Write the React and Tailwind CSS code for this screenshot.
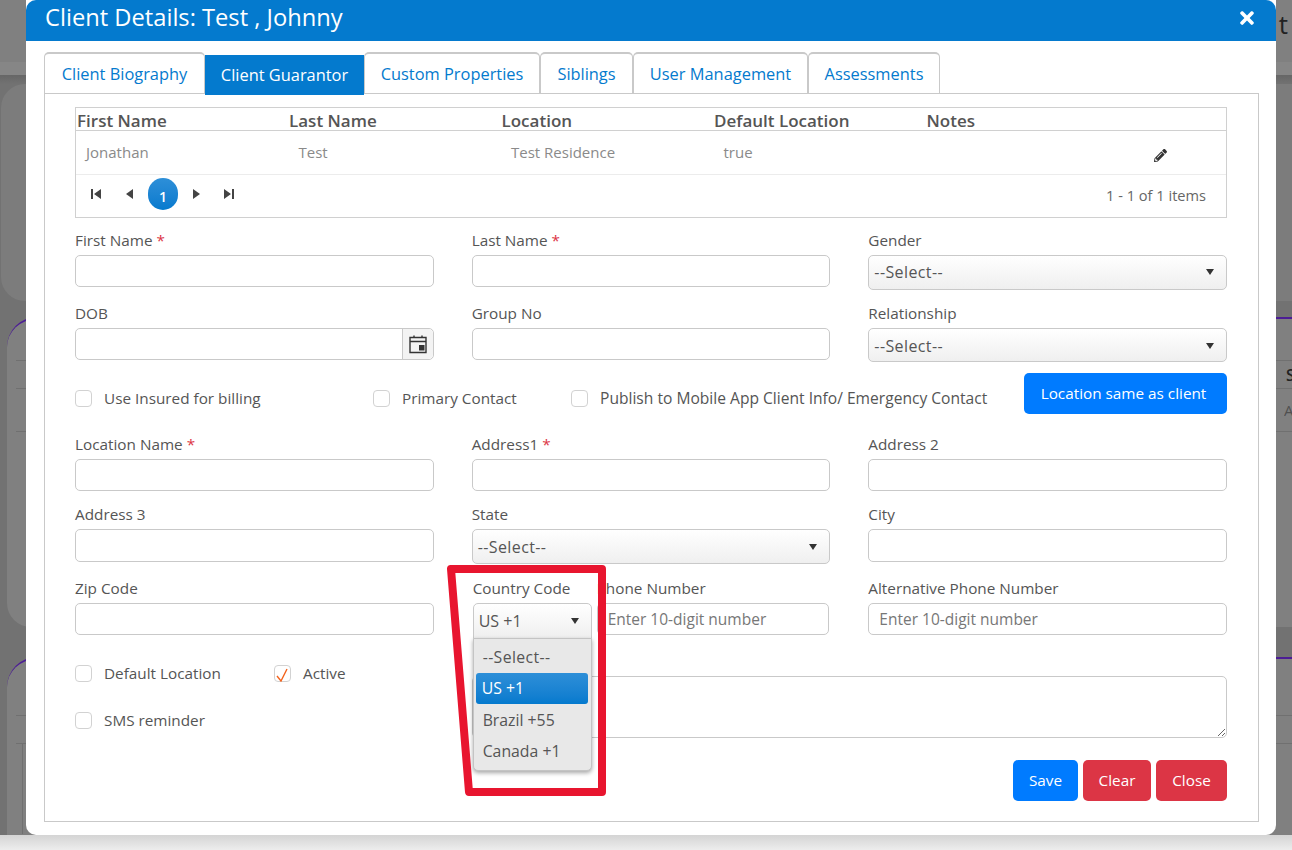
import React from 'react';
import { FaPencilAlt, FaTimes } from 'react-icons/fa';

const Required = () => <span className="text-[#dc3545]"> *</span>;

const Field = ({ label, required, children, className = '' }) => (
  <div className={className}>
    <label className="block h-[21px] text-[15.3px] leading-[21px] text-[#555]">
      {label}
      {required && <Required />}
    </label>
    <div className="mt-1">{children}</div>
  </div>
);

const TextInput = ({ placeholder, className = '' }) => (
  <input
    placeholder={placeholder}
    className={`block h-8 w-full rounded-[5px] border border-[#c9c9c9] bg-white px-[10px] text-[15.5px] text-[#555] placeholder:text-[#777] ${className}`}
  />
);

const Caret = () => (
  <svg width="8" height="6" viewBox="0 0 8 6" className="text-[#333]">
    <path d="M0 0h8L4 6z" fill="currentColor" />
  </svg>
);

const Select = ({ value = '--Select--', className = '' }) => (
  <div
    className={`flex items-center justify-between rounded-[5px] border border-[#c9c9c9] bg-gradient-to-b from-white to-[#efefef] pl-[5px] pr-3 text-[16px] text-[#555] ${className}`}
  >
    <span className={value === '--Select--' ? 'tracking-[0.4px]' : ''}>{value}</span>
    <Caret />
  </div>
);

const Checkbox = ({ label, checked, className = '', textClass = '' }) => (
  <label className={`flex items-center text-[15.3px] leading-[21px] text-[#555] ${className}`}>
    <span className="relative mr-3 block h-[17px] w-[17px] rounded-[4px] border border-[#d2d2d2] bg-white">
      {checked && (
        <svg width="17" height="17" viewBox="0 0 17 17" className="absolute -left-px -top-px text-[#f3641e]">
          <path d="M3 11l4 5 6-12" fill="none" stroke="currentColor" strokeWidth="1.4" />
        </svg>
      )}
    </span>
    <span className={textClass}>{label}</span>
  </label>
);

const Tab = ({ label, width, active }) =>
  active ? (
    <div
      className={`${width} -mb-[2px] mt-[3px] flex h-10 items-center justify-center bg-[#047ace] pt-px text-[16.4px] text-white`}
    >
      {label}
    </div>
  ) : (
    <div
      className={`${width} flex h-[41px] items-center justify-center rounded-t-[5px] border-x border-t-2 border-[#c9c9c9] pt-[2px] text-[16.4px] text-[#047ace]`}
    >
      {label}
    </div>
  );

const PagerIcon = ({ d }) => (
  <svg width="10" height="10" viewBox="0 0 10 10" className="text-[#444]">
    <path d={d} fill="currentColor" />
  </svg>
);

const GridTable = () => (
  <div className="border border-[#d0d0d0] text-[#555]">
    <div className="grid h-[23px] grid-cols-[212px_212.5px_212.5px_212.5px_1fr] items-center border-b border-[#d0d0d0] pb-[2px] pl-px text-[17px] font-semibold">
      <span>First Name</span>
      <span>Last Name</span>
      <span>Location</span>
      <span>Default Location</span>
      <span>Notes</span>
    </div>
    <div className="grid h-11 grid-cols-[212.5px_212.5px_212.5px_212.5px_1fr] items-center border-b border-[#ececec] pl-[10px] text-[15px] text-[#8a8a8a]">
      <span>Jonathan</span>
      <span>Test</span>
      <span>Test Residence</span>
      <span>true</span>
      <span className="flex justify-end pr-[59px] pt-[6px] text-[#333]">
        <FaPencilAlt size={13} />
      </span>
    </div>
    <div className="flex h-[42px] items-center justify-between pb-1 pl-[15px] pr-5">
      <div className="flex items-center text-[#444]">
        <span className="w-[33px]"><PagerIcon d="M0 0h2v10H0zM10 0v10L3 5z" /></span>
        <span className="w-[24px]"><PagerIcon d="M9 0v10L2 5z" /></span>
        <span className="flex h-8 w-[30px] items-center justify-center rounded-full bg-gradient-to-b from-[#2d8fd8] to-[#047ace] pt-1 text-[14px] font-semibold text-white">
          1
        </span>
        <span className="ml-[14px] w-[32px]"><PagerIcon d="M1 0v10l7-5z" /></span>
        <span className="w-[14px]"><PagerIcon d="M0 0v10l7-5zM8 0h2v10H8z" /></span>
      </div>
      <span className="pt-1 text-[14.6px] text-[#666]">1 - 1 of 1 items</span>
    </div>
  </div>
);

const CountryDropdown = () => (
  <div className="absolute left-0 top-[35px] z-10 h-[133px] w-[119px] rounded-b-[5px] border border-[#c4c4c4] bg-[#e8e8e8] pl-[2px] pr-[3px] pt-[3px] text-[15.8px] text-[#555] shadow-[0_2px_4px_rgba(0,0,0,0.35)]">
    <div className="flex h-[31px] items-center pl-[7px] tracking-[0.4px]">--Select--</div>
    <div className="flex h-[31px] items-center rounded-[3px] bg-gradient-to-b from-[#2d8fd8] to-[#047ace] pl-[6px] pt-px text-white">
      US +1
    </div>
    <div className="flex h-[31px] items-center pl-[7px] pt-[2px]">Brazil +55</div>
    <div className="flex h-[31px] items-center pl-[7px] pt-[2px]">Canada +1</div>
  </div>
);

// dimmed page behind the modal, only its edges show
const Backdrop = () => (
  <div className="absolute inset-0 flex flex-col bg-[#727272]">
    <div className="flex h-[62px] justify-end bg-[#808080] pr-[4px] pt-[9px] text-[26px] leading-[30px] text-[#222]">
      t
    </div>
    <div className="h-[13px] bg-[#868686]" />
    <div className="h-[9px] bg-gradient-to-b from-[#666] to-[#727272]" />
    <div className="ml-px h-[217px] rounded-l-[24px] bg-[#7c7c7c]" />
    <div className="h-[16px]" />
    <div className="ml-[7px] h-[310px] rounded-tl-[30px] rounded-bl-[24px] border-t-2 border-[#4c1d95] bg-[#808080]">
      <div className="ml-[9px] mt-[41px] flex h-[29px] justify-end border-y border-[#707070] text-[16px] font-semibold leading-[28px] text-[#222]">
        <span className="w-[6px] overflow-hidden">S</span>
      </div>
      <div className="ml-[9px] flex h-[43px] items-center justify-end border-b border-[#707070] text-[15px] text-[#505050]">
        <span className="w-[8px] overflow-hidden">A</span>
      </div>
    </div>
    <div className="h-[30px]" />
    <div className="ml-[7px] flex-1 rounded-tl-[30px] border-t-2 border-[#4c1d95] bg-[#808080]">
      <div className="ml-[9px] mt-[56px] h-[29px] border-y border-[#707070]" />
      <div className="ml-[15px] h-[90px] border-l border-[#707070]" />
    </div>
    <div className="h-[15px] bg-gradient-to-b from-[#d4d4d4] to-[#ededed]" />
  </div>
);

const Annotation = () => (
  <svg width="170" height="245" viewBox="0 0 170 245" className="absolute left-[443px] top-[560px] z-20">
    <path d="M8 9H159V232H26Z" fill="none" stroke="#e8152f" strokeWidth="8" strokeLinejoin="round" />
  </svg>
);

export default function App() {
  return (
    <div
      className="relative h-[850px] w-[1292px] overflow-hidden"
      style={{ fontFamily: '"Open Sans", "Noto Sans", sans-serif' }}
    >
      <Backdrop />

      <div className="absolute left-[26px] top-0 h-[835px] w-[1250px] rounded-b-[10px] bg-white">
        <div className="flex h-[41px] items-center justify-between rounded-t-[10px] bg-[#047ace] pb-1.5 pl-[19px] pr-[19px] text-white">
          <h1 className="text-[23.7px] font-normal">Client Details: Test , Johnny</h1>
          <FaTimes size={20} />
        </div>

        <div className="ml-[18px] mr-[17px] pt-[11px]">
          <div className="flex">
            <Tab label="Client Biography" width="w-[161px]" />
            <Tab label="Client Guarantor" width="w-[159px]" active />
            <Tab label="Custom Properties" width="w-[176px]" />
            <Tab label="Siblings" width="w-[93px]" />
            <Tab label="User Management" width="w-[175px]" />
            <Tab label="Assessments" width="w-[132px]" />
          </div>

          <div className="h-[729px] border border-[#c9c9c9] pl-[30px] pr-[31px] pt-[13px]">
            <GridTable />

            <div className="mt-3 grid grid-cols-3 gap-x-[38px]">
              <Field label="First Name" required><TextInput /></Field>
              <Field label="Last Name" required><TextInput /></Field>
              <Field label="Gender"><Select className="h-[35px] pb-px" /></Field>
            </div>

            <div className="mt-[13px] grid grid-cols-3 gap-x-[38px]">
              <Field label="DOB">
                <div className="flex h-8 rounded-[5px] border border-[#c9c9c9]">
                  <div className="flex-1" />
                  <div className="flex w-[31px] items-center justify-center rounded-r-[5px] border-l border-[#c9c9c9] bg-[#f3f3f3]">
                    <svg width="18" height="20" viewBox="0 0 18 20" className="text-[#333]">
                      <path d="M1 3.5h16v15H1zM1 7.5h16M5 1.5V4M13 1.5V4" fill="none" stroke="currentColor" strokeWidth="1.4" />
                      <path d="M10 11h5.5v5.5H10z" fill="currentColor" />
                    </svg>
                  </div>
                </div>
              </Field>
              <Field label="Group No"><TextInput /></Field>
              <Field label="Relationship"><Select className="mt-px h-[34px] pt-[2px]" /></Field>
            </div>

            <div className="mt-[11px] flex h-[41px] items-start">
              <Checkbox label="Use Insured for billing" className="mt-[15px] w-[298px]" />
              <Checkbox label="Primary Contact" className="mt-[15px] w-[198px]" />
              <Checkbox
                label="Publish to Mobile App Client Info/ Emergency Contact"
                className="mt-[15px] w-[453px]"
                textClass="text-[15.6px]"
              />
              <button className="h-[41px] w-[203px] rounded-[5px] bg-[#007bff] pr-1 text-[15.3px] text-white">
                Location same as client
              </button>
            </div>

            <div className="mt-5 grid grid-cols-3 gap-x-[38px]">
              <Field label="Location Name" required><TextInput /></Field>
              <Field label="Address1" required><TextInput /></Field>
              <Field label="Address 2"><TextInput /></Field>
            </div>

            <div className="mt-[13px] grid grid-cols-3 gap-x-[38px]">
              <Field label="Address 3"><TextInput className="h-[33px]" /></Field>
              <Field label="State"><Select value="--Select--" className="h-[35px]" /></Field>
              <Field label="City"><TextInput className="h-[33px]" /></Field>
            </div>

            <div className="mt-[14px] grid grid-cols-3 gap-x-[38px]">
              <Field label="Zip Code"><TextInput /></Field>
              <div className="mr-px flex gap-[5px] pl-px">
                <div className="relative w-[119px] shrink-0">
                  <Field label="Country Code">
                    <div className="relative">
                      <Select value="US +1" className="h-9 rounded-b-none" />
                      <CountryDropdown />
                    </div>
                  </Field>
                </div>
                <Field label="Phone Number" className="flex-1">
                  <TextInput placeholder="Enter 10-digit number" />
                </Field>
              </div>
              <Field label="Alternative Phone Number">
                <TextInput placeholder="Enter 10-digit number" />
              </Field>
            </div>

            <div className="mt-6 grid grid-cols-3 gap-x-[38px]">
              <div>
                <div className="flex">
                  <Checkbox label="Default Location" className="w-[199px]" />
                  <Checkbox label="Active" checked />
                </div>
                <Checkbox label="SMS reminder" className="mt-[26px]" />
              </div>
              <textarea className="col-span-2 mt-[13px] h-[62px] rounded-[5px] border border-[#c9c9c9]" />
            </div>

            <div className="mt-[22px] flex justify-end gap-[5px] text-[15.3px] text-white">
              <button className="h-[41px] w-[65px] rounded-[5px] bg-[#007bff]">Save</button>
              <button className="h-[41px] w-[68px] rounded-[5px] bg-[#dc3545]">Clear</button>
              <button className="h-[41px] w-[71px] rounded-[5px] bg-[#dc3545]">Close</button>
            </div>
          </div>
        </div>
      </div>

      <Annotation />
    </div>
  );
}
